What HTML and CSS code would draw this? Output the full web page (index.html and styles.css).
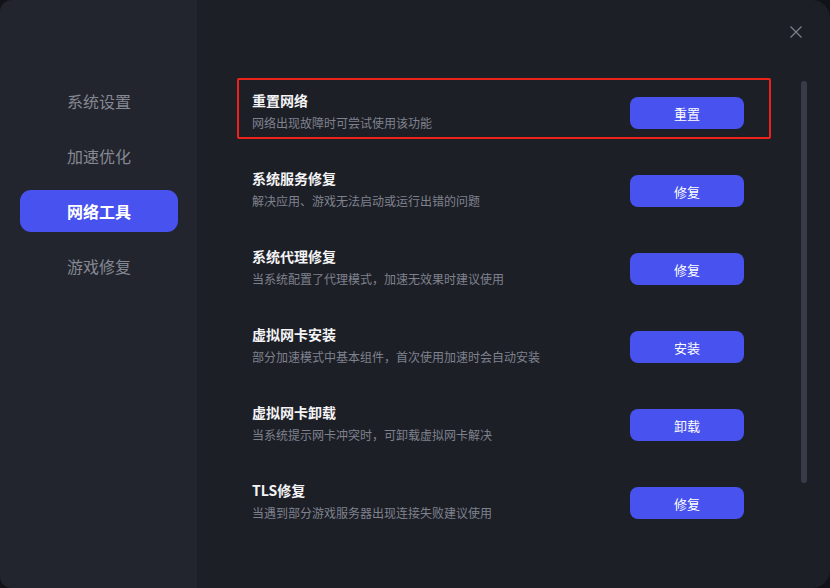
FILE: index.html
```html
<!DOCTYPE html>
<html lang="zh-CN">
<head>
<meta charset="utf-8">
<title>网络工具</title>
<link rel="stylesheet" href="styles.css">
</head>
<body>
<div class="window">
  <aside class="sidebar">
    <div class="nav-item">系统设置</div>
    <div class="nav-item">加速优化</div>
    <div class="nav-item active">网络工具</div>
    <div class="nav-item">游戏修复</div>
  </aside>
  <main class="main">
    <div class="close" aria-label="关闭">
      <svg width="12" height="12" viewBox="0 0 12 12"><path d="M0.5 0.5 L11.5 11.5 M11.5 0.5 L0.5 11.5" stroke="#7d7f89" stroke-width="1.3" fill="none"/></svg>
    </div>
    <div class="scrollbar"></div>
    <div class="list">
      <div class="item highlight">
        <div class="text"><div class="title">重置网络</div><div class="desc">网络出现故障时可尝试使用该功能</div></div>
        <button class="btn">重置</button>
      </div>
      <div class="item">
        <div class="text"><div class="title">系统服务修复</div><div class="desc">解决应用、游戏无法启动或运行出错的问题</div></div>
        <button class="btn">修复</button>
      </div>
      <div class="item">
        <div class="text"><div class="title">系统代理修复</div><div class="desc">当系统配置了代理模式，加速无效果时建议使用</div></div>
        <button class="btn">修复</button>
      </div>
      <div class="item">
        <div class="text"><div class="title">虚拟网卡安装</div><div class="desc">部分加速模式中基本组件，首次使用加速时会自动安装</div></div>
        <button class="btn">安装</button>
      </div>
      <div class="item">
        <div class="text"><div class="title">虚拟网卡卸载</div><div class="desc">当系统提示网卡冲突时，可卸载虚拟网卡解决</div></div>
        <button class="btn">卸载</button>
      </div>
      <div class="item">
        <div class="text"><div class="title">TLS修复</div><div class="desc">当遇到部分游戏服务器出现连接失败建议使用</div></div>
        <button class="btn">修复</button>
      </div>
    </div>
  </main>
</div>
</body>
</html>
```
FILE: styles.css
```css
* { box-sizing: border-box; }
html, body {
  margin: 0;
  width: 830px;
  height: 588px;
  background: #121318;
  overflow: hidden;
}
body {
  font-family: "Noto Sans CJK SC", "Noto Sans", "Liberation Sans", sans-serif;
}
.window {
  width: 830px;
  height: 588px;
  display: flex;
  border-radius: 12px 18px 18px 12px;
  overflow: hidden;
  background: #1d1f27;
}
.sidebar {
  width: 197px;
  flex: none;
  background: #23252e;
  padding: 80px 19px 0 20px;
  display: flex;
  flex-direction: column;
  gap: 13px;
}
.nav-item {
  height: 42px;
  display: flex;
  align-items: center;
  justify-content: center;
  font-size: 16px;
  color: #858892;
  border-radius: 11px;
}
.nav-item.active {
  background: #4852ee;
  color: #ffffff;
  font-weight: bold;
}
.main {
  flex: 1;
  position: relative;
  padding: 78px 0 0 40px;
}
.close {
  position: absolute;
  top: 26px;
  right: 28px;
  width: 12px;
  height: 12px;
  display: flex;
}
.scrollbar {
  position: absolute;
  left: 604px;
  top: 81px;
  width: 6px;
  height: 402px;
  border-radius: 3px;
  background: #393b48;
}
.list {
  width: 534px;
  display: flex;
  flex-direction: column;
  gap: 18px;
}
.item {
  height: 61px;
  border: 2px solid transparent;
  border-radius: 2px;
  padding: 10px 25px 0 13px;
  display: flex;
  justify-content: space-between;
  align-items: flex-start;
}
.item + .item {
  margin-top: -1px;
}
.item.highlight {
  border-color: #ec2318;
}
.title {
  font-size: 14px;
  line-height: 20px;
  font-weight: bold;
  color: #f4f4f6;
}
.desc {
  font-size: 12px;
  line-height: 26px;
  color: #7f828d;
}
.btn {
  margin-top: 7px;
  width: 114px;
  height: 32px;
  border: none;
  border-radius: 8px;
  background: #4852ee;
  color: #ffffff;
  font-family: inherit;
  font-size: 13px;
  padding: 0;
}
```
